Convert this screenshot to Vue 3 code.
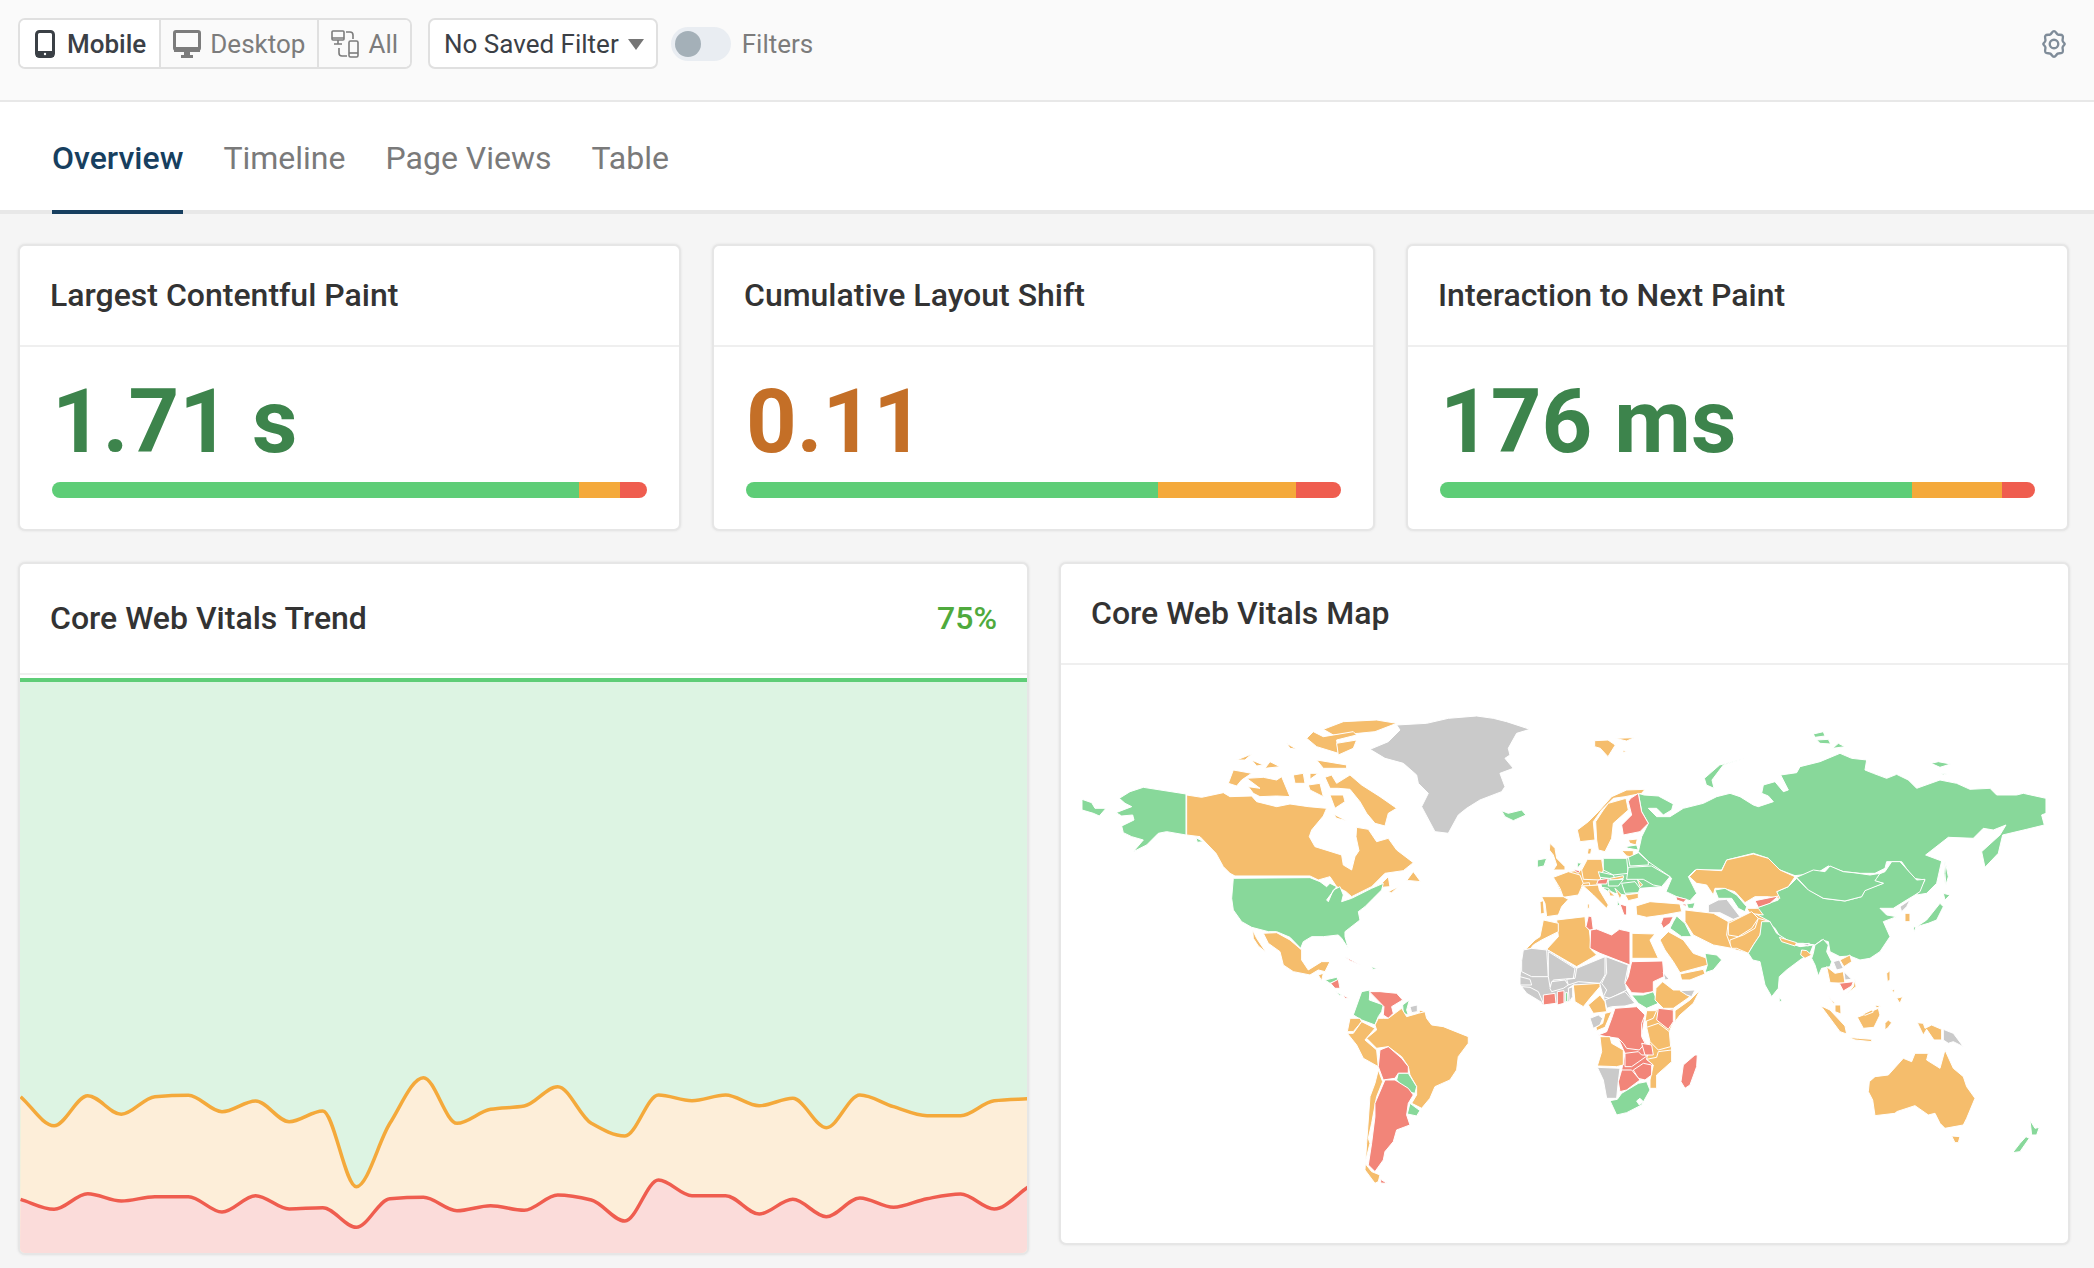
<template>
  <div class="page">
    <div class="toolbar">
      <div class="device-group">
        <button class="device active">
          <svg width="20" height="28" viewBox="0 0 20 28">
            <rect x="1.5" y="1.5" width="17" height="25" rx="3" fill="#fff" stroke="#3b4046" stroke-width="3" />
            <rect x="1" y="21" width="18" height="6" fill="#3b4046" />
            <circle cx="10" cy="24" r="1.2" fill="#fff" />
          </svg>
          Mobile
        </button>
        <button class="device">
          <svg width="28" height="28" viewBox="0 0 28 28">
            <rect x="1.5" y="1.5" width="25" height="18" rx="1.5" fill="none" stroke="#7c7c7c" stroke-width="3" />
            <rect x="1" y="17" width="26" height="5" fill="#7c7c7c" />
            <path d="M11 22h6v3h3v3H8v-3h3z" fill="#7c7c7c" />
          </svg>
          Desktop
        </button>
        <button class="device">
          <svg width="28" height="28" viewBox="0 0 28 28" fill="none" stroke="#7c7c7c" stroke-width="1.6">
            <rect x="1" y="1" width="12" height="9" rx="1" />
            <path d="M1 8h12M7 10v4M3 14h8" />
            <path d="M15 2h4a3 3 0 0 1 3 3v4M8 18v5a3 3 0 0 0 3 3h5" />
            <rect x="18" y="11" width="9" height="16" rx="1.5" />
            <path d="M18 23h9" />
          </svg>
          All
        </button>
      </div>
      <button class="saved-filter">No Saved Filter <span class="caret"></span></button>
      <span class="toggle"><span class="knob"></span></span>
      <span class="filters-label">Filters</span>
      <svg class="gear" width="30" height="30" viewBox="0 0 28 28" fill="none" stroke="#7f8c99" stroke-width="2.200">
        <path
          d="M14 2c1.600 0 2 2.200 3.400 3 1.500.8 3.600-.1 4.600 1.200 1 1.300-.2 3 0 4.600.2 1.500 2 2.400 2 3.200s-1.800 1.700-2 3.200c-.2 1.600 1 3.300 0 4.600-1 1.300-3.100.4-4.600 1.200-1.400.8-1.800 3-3.400 3s-2-2.200-3.400-3c-1.500-.8-3.600.1-4.600-1.200-1-1.300.2-3 0-4.600-.2-1.500-2-2.400-2-3.200s1.800-1.700 2-3.200c.2-1.600-1-3.300 0-4.600 1-1.300 3.100-.4 4.600-1.200C12 4.200 12.400 2 14 2z"
        />
        <circle cx="14" cy="14" r="4" />
      </svg>
    </div>

    <div class="tabs">
      <a v-for="(tab, i) in tabs" :key="tab" class="tab" :class="{ current: i === 0 }">{{ tab }}</a>
    </div>

    <div class="metrics">
      <div v-for="m in metrics" :key="m.title" class="card">
        <div class="card-head">{{ m.title }}</div>
        <div class="metric-body">
          <div class="metric-value" :class="m.tone">{{ m.value }}</div>
          <div class="bar">
            <span class="good" :style="{ width: m.good + '%' }"></span>
            <span class="warn" :style="{ width: m.warn + '%' }"></span>
            <span class="bad" :style="{ width: 100 - m.good - m.warn + '%' }"></span>
          </div>
        </div>
      </div>
    </div>

    <div class="panels">
      <div class="card trend">
        <div class="card-head trend-head">
          <span>Core Web Vitals Trend</span>
          <span class="pct">75%</span>
        </div>
        <svg class="chart" viewBox="20 675 1007 578" preserveAspectRatio="none">
          <rect x="20" y="680" width="1007" height="574" fill="#ddf4e3" />
          <path :d="orangeArea" fill="#fdeed9" />
          <path :d="redArea" fill="#fbdcda" />
          <path d="M20 680H1027" stroke="#5ecd77" stroke-width="4" fill="none" />
          <path :d="orangeLine" stroke="#f4a93b" stroke-width="3.500" fill="none" />
          <path :d="redLine" stroke="#ef5d4f" stroke-width="3.500" fill="none" />
        </svg>
      </div>

      <div class="card map-card">
        <div class="card-head">Core Web Vitals Map</div>
        <svg class="map" width="1007" height="578" viewBox="1061 665 1007 578">
          <g v-for="f in mapFrames" :key="f.x + '-' + f.y" :transform="`translate(${f.x} ${f.y}) scale(0.3333)`">
            <polygon v-for="(s, i) in f.shapes" :key="i" :class="'c-' + s[0]" :points="s[1]" />
          </g>
        </svg>
      </div>
    </div>
  </div>
</template>

<script setup>
const tabs = ['Overview', 'Timeline', 'Page Views', 'Table']

const metrics = [
  { title: 'Largest Contentful Paint', value: '1.71 s', tone: 'ok', good: 88.5, warn: 6.9 },
  { title: 'Cumulative Layout Shift', value: '0.11', tone: 'mid', good: 69.2, warn: 23.3 },
  { title: 'Interaction to Next Paint', value: '176 ms', tone: 'ok', good: 79.4, warn: 15.1 },
]

// chart samples, read off the reference
const orangeY = [290, 377, 287, 343, 290, 286, 335, 303, 365, 333, 560, 370, 233, 370, 328, 318, 260, 370, 408, 285, 302, 285, 317, 295, 383, 285, 320, 347, 347, 302, 296]
const redY = [598, 628, 581, 603, 590, 590, 636, 587, 627, 623, 682, 596, 592, 632, 617, 631, 585, 600, 663, 540, 587, 587, 642, 598, 650, 594, 622, 596, 582, 627, 562]

const toPoints = (ys) => ys.map((y, i) => [(31 + i * 50.63) / 1.508, 1000 + y / 3])

const curve = (pts) => {
  const slopes = []
  for (let i = 0; i < pts.length - 1; i++) {
    slopes.push((pts[i + 1][1] - pts[i][1]) / (pts[i + 1][0] - pts[i][0]))
  }
  const m = pts.map((_, i) => {
    if (i === 0) return slopes[0]
    if (i === pts.length - 1) return slopes[i - 1]
    const a = slopes[i - 1]
    const b = slopes[i]
    if (a * b <= 0) return 0
    return (2 * a * b) / (a + b)
  })
  let d = `M${pts[0][0].toFixed(1)} ${pts[0][1].toFixed(1)}`
  for (let i = 0; i < pts.length - 1; i++) {
    const dx = (pts[i + 1][0] - pts[i][0]) / 3
    d += `C${(pts[i][0] + dx).toFixed(1)} ${(pts[i][1] + m[i] * dx).toFixed(1)} ${(pts[i + 1][0] - dx).toFixed(1)} ${(pts[i + 1][1] - m[i + 1] * dx).toFixed(1)} ${pts[i + 1][0].toFixed(1)} ${pts[i + 1][1].toFixed(1)}`
  }
  return d
}

const orangeLine = curve(toPoints(orangeY))
const redLine = curve(toPoints(redY))
const orangeArea = orangeLine + 'V1254H20Z'
const redArea = redLine + 'V1254H20Z'

// map shapes, each frame uses 3x coordinates from its origin
const mapFrames = [
  {
    x: 1060,
    y: 690,
    shapes: [
      ['g', '378,312 250,292 210,305 178,325 195,340 215,350 168,368 185,378 218,375 222,390 185,408 190,428 215,440 250,450 220,485 260,465 295,430 320,425 378,435'],
      ['g', '66,328 95,338 105,355 138,355 118,378 100,370 66,360'],
      ['o', '380,315 425,322 490,308 510,320 575,318 590,335 650,350 690,342 745,350 800,355 790,378 755,420 748,440 765,470 845,495 850,525 875,540 885,500 897,482 888,440 890,412 925,418 950,455 985,445 1010,480 1060,518 1030,542 975,550 935,590 875,620 858,605 830,590 810,560 775,570 750,558 525,558 510,550 490,530 468,490 420,440 380,435'],
      ['g', '408,443 430,455 412,457'],
      ['o', '795,262 815,255 830,280 870,255 905,285 960,320 1010,355 985,370 975,408 945,400 920,370 900,335 870,298 835,295 810,295'],
      ['o', '820,372 860,392 830,385'],
      ['o', '560,265 610,262 650,270 665,260 690,320 650,318 600,320 580,310 565,290 600,295'],
      ['o', '505,280 520,240 575,250 545,270 530,288'],
      ['o', '700,255 730,250 735,280 705,280'],
      ['o', '745,285 780,280 790,320 750,300'],
      ['o', '810,315 850,315 855,335 825,355'],
      ['o', '790,118 850,95 950,90 1010,100 945,125 895,130 820,135'],
      ['o', '740,145 760,125 790,140 880,125 890,135 830,150 835,190 770,170'],
      ['o', '830,160 890,150 880,175 835,195'],
      ['o', '770,210 860,225 860,235 790,235'],
      ['o', '575,210 610,225 590,228'],
      ['o', '530,210 575,192 555,210'],
      ['o', '680,160 710,178 690,175'],
      ['o', '630,215 660,230 615,235'],
      ['o', '750,250 775,250 750,268'],
      ['o', '1040,572 1060,545 1082,575 1050,572'],
      ['o', '985,605 1015,590 995,608'],
      ['o', '960,585 985,560 990,590 965,592'],
      ['g', '520,565 750,563 780,575 800,590 810,580 830,590 800,630 805,635 820,600 840,590 850,615 845,635 875,625 935,595 970,580 965,600 940,625 915,650 895,665 900,690 855,725 855,740 865,775 845,745 835,735 790,740 755,740 730,755 722,775 690,742 650,725 625,725 575,712 545,695 520,660 515,625'],
      ['o', '610,730 650,728 690,750 725,780 725,810 745,840 785,815 810,815 795,845 775,840 750,855 700,845 670,825 660,785 625,760'],
      ['o', '578,720 590,745 618,787 595,768 580,745'],
      ['g', '795,870 830,862 835,870 810,880'],
      ['r', '812,880 835,868 840,895 825,895'],
      ['g', '825,903 845,915 840,917'],
      ['r', '850,915 865,925 855,925'],
      ['o', '775,855 790,850 785,872'],
      ['r', '855,800 902,824 870,812'],
      ['g', '935,830 952,836 938,838'],
      ['g', '905,905 930,900 928,930 970,945 965,965 955,980 945,1005 905,990 880,975'],
      ['r', '928,905 960,905 1010,910 1028,930 995,950 1000,970 985,985 970,975 972,950'],
      ['g', '1028,945 1048,930 1040,960 1045,975 1030,970'],
      ['k', '1050,950 1072,945 1072,965 1055,968'],
      ['o', '1078,960 1095,965 1078,972'],
      ['o', '955,985 970,985 985,985 1025,955 1040,980 1075,970 1095,965 1100,985 1115,1005 1150,1010 1225,1040 1225,1060 1195,1100 1190,1140 1170,1170 1125,1190 1110,1225 1085,1255 1055,1240 1070,1215 1070,1190 1050,1155 1045,1130 1025,1100 985,1070 950,1075 920,1045 950,1020 945,1005'],
      ['o', '870,985 900,985 905,995 880,1025 862,1025'],
      ['o', '905,995 945,1015 915,1050 950,1080 955,1130 910,1105 890,1065 862,1030 880,1030'],
      ['r', '960,1080 985,1070 1025,1105 1045,1130 1045,1150 1015,1150 1005,1165 970,1170 955,1130'],
      ['g', '1015,1150 1045,1150 1070,1190 1065,1210 1040,1205 1010,1170'],
      ['o', '955,1140 968,1175 950,1220 935,1300 925,1345 930,1360 915,1420 935,1445 960,1455 955,1475 945,1480 915,1440 920,1360 930,1220 945,1180'],
      ['r', '975,1170 1005,1170 1045,1195 1060,1215 1045,1240 1040,1275 1050,1305 1010,1320 1000,1355 975,1385 970,1410 945,1445 925,1425 935,1360 945,1280 945,1240'],
      ['g', '1050,1240 1080,1262 1070,1278 1042,1272'],
      ['r', '962,1468 982,1481 962,1479'],
      ['k', '1010,105 1100,100 1165,85 1250,78 1300,85 1340,95 1410,118 1370,130 1345,175 1350,195 1335,205 1360,235 1320,250 1335,290 1325,305 1260,330 1220,355 1195,375 1165,430 1125,425 1085,350 1105,310 1075,280 1070,255 1030,220 975,205 930,178 985,155 1020,120'],
      ['g', '1325,362 1345,370 1385,360 1398,375 1360,392 1335,380'],
    ],
  },
  {
    // russia and the far east
    x: 1760,
    y: 730,
    shapes: [
      ['g', '-365,190 -348,195 -305,198 -260,222 -265,240 -290,255 -310,235 -335,235 -310,260 -270,260 -230,235 -170,220 -130,200 -90,190 -60,200 -20,225 -5,230 40,215 25,198 5,190 10,165 45,155 70,185 85,180 62,135 110,128 120,110 180,95 240,70 275,85 320,90 315,120 340,130 380,145 410,133 445,150 470,175 540,150 590,160 630,178 690,175 710,195 770,195 790,190 858,205 858,250 845,255 853,285 800,298 728,315 715,370 675,412 665,365 720,315 738,285 700,300 670,295 640,325 565,322 497,375 545,393 530,460 500,490 470,495 495,450 460,445 425,395 380,395 375,415 345,430 300,430 250,425 205,408 170,430 105,437 60,420 25,385 -20,370 -100,390 -115,420 -195,420 -215,440 -190,490 -210,512 -250,500 -282,485 -265,445 -325,408 -335,395 -365,365 -355,320 -335,280 -355,245'],
      ['g', '160,12 190,5 195,18 165,22'],
      ['g', '170,30 205,28 212,42 180,40'],
      ['g', '218,55 235,40 255,50'],
      ['g', '513,100 535,95 572,102 540,112'],
      ['g', '545,130 560,132 548,135'],
      ['g', '-167,145 -121,105 -42,85 -110,105 -144,150 -138,175 -161,165'],
      ['g', '555,395 565,435 555,460 552,430'],
    ],
  },
  {
    x: 1680,
    y: 820,
    shapes: [
      ['g', '350,175 380,205 430,235 495,243 545,230 555,210 610,190 580,182 590,165 615,155 635,125 660,125 710,180 735,178 720,215 705,225 680,240 640,265 600,265 620,285 650,290 610,305 630,350 600,395 570,415 540,420 510,408 480,410 450,395 445,365 425,360 405,375 370,370 340,370 300,350 285,325 260,305 235,290 225,265 295,240 290,215 325,200'],
      ['g', '350,172 400,150 435,155 450,138 490,155 520,158 570,165 600,160 590,175 585,182 610,190 555,212 545,230 495,243 430,235 385,210'],
      ['o', '28,170 50,148 125,152 140,120 220,102 265,115 300,150 345,170 325,200 290,215 300,235 265,230 225,230 195,248 165,215 130,205 105,205 100,225 80,195 50,190'],
      // underlay so iran, afghanistan and pakistan touch
      ['o', '15,270 100,280 145,305 215,275 270,305 240,345 205,400 150,385 100,375 40,345 15,305'],
      ['g', '105,210 135,205 170,225 200,260 195,275 175,265 155,235 115,235'],
      ['k', '85,255 115,240 140,238 180,290 160,298 120,278 85,278'],
      ['r', '225,242 295,228 270,250 235,262'],
      ['o', '200,265 235,265 250,285 210,280'],
      ['o', '145,310 215,275 235,295 215,325 175,350 145,345'],
      ['o', '150,360 190,345 225,325 235,295 270,305 245,320 240,345 220,375 205,400 170,385 150,385'],
      ['o', '15,270 100,280 145,305 140,345 155,385 100,375 40,345 15,305'],
      ['g', '245,305 270,305 290,340 345,375 360,380 400,375 390,400 360,420 320,450 298,470 295,505 275,530 255,495 240,425 218,420 205,400 220,375 240,345'],
      ['g', '405,375 430,358 445,375 440,395 455,425 450,440 425,445 415,468 405,435 395,415 400,400'],
      ['o', '298,352 350,368 345,378 305,365'],
      ['k', '365,372 388,370 385,378'],
      ['o', '365,390 380,392 395,405 375,415 362,405'],
      ['o', '440,440 465,460 490,455 495,490 450,488'],
      ['k', '460,425 478,420 490,445 470,450'],
      ['o', '480,420 510,405 515,425 492,440'],
      ['k', '492,455 515,478 495,480'],
      ['r', '478,490 520,485 515,498 490,513'],
      ['o', '525,478 528,500 498,522 520,500'],
      ['k', '660,260 690,240 680,260 665,275'],
      ['o', '675,280 690,280 690,305 675,305'],
      ['g', '780,250 790,260 770,300 745,310 710,320 740,300'],
      ['g', '790,220 810,225 795,240'],
      ['g', '797,130 805,170 798,195 795,160'],
      ['g', '700,320 708,322 703,335'],
      ['g', '298,530 306,543 298,545'],
    ],
  },
  {
    x: 1500,
    y: 780,
    shapes: [
      // underlays so neighbours in europe touch
      ['g', '310,235 380,235 415,218 445,245 510,290 485,320 420,325 415,338 375,345 345,340 305,322 295,275'],
      ['o', '245,270 262,238 305,238 310,270 295,315 250,318 235,345 190,352 160,292 205,275'],
      ['o', '284,-118 324,-120 346,-105 324,-70 301,-95 284,-100'],
      ['o', '346,-125 403,-127 380,-117'],
      ['o', '369,-90 380,-85 369,-83'],
      ['g', '112,240 140,235 132,258 112,262'],
      ['o', '150,190 165,205 170,235 195,260 195,270 160,270 170,255 160,225 148,210'],
      ['o', '335,50 380,30 435,28 425,40 375,50 340,55 305,90 280,125 285,180 240,185 232,150 265,125 295,95'],
      ['o', '325,70 378,55 385,90 340,130 335,175 315,215 295,210 290,180 287,125 310,90'],
      ['r', '392,55 415,40 425,95 445,130 420,155 370,165 365,135 395,105 385,65'],
      ['o', '385,180 412,177 408,195 390,190'],
      ['g', '375,200 410,195 415,210 385,205'],
      ['o', '365,212 400,212 400,232 380,228'],
      ['g', '415,218 445,245 445,255 390,258 385,232'],
      ['g', '310,235 380,235 385,280 340,285 310,270'],
      ['o', '262,238 305,238 310,270 300,300 250,298 245,270'],
      ['o', '265,205 275,205 272,222 262,222'],
      ['g', '232,248 245,250 232,265'],
      ['r', '218,268 240,272 235,280'],
      ['o', '160,292 205,275 240,285 250,310 235,345 190,352 180,325'],
      ['o', '125,350 190,350 205,358 185,380 175,405 140,410 135,370'],
      ['o', '120,365 130,362 133,400 122,402'],
      ['o', '250,310 268,308 270,318 245,318'],
      ['r', '295,300 325,295 320,312 290,312'],
      ['g', '295,275 340,285 345,297 300,292'],
      ['o', '330,295 370,287 370,295 335,302'],
      ['g', '325,300 370,298 355,318 325,318'],
      ['g', '365,310 405,305 420,325 415,338 375,340'],
      ['o', '412,298 428,315 420,320'],
      ['g', '385,262 455,258 510,290 485,320 460,315 430,298 380,298'],
      ['o', '375,345 415,340 415,355 385,362'],
      ['o', '345,325 365,345 360,358'],
      ['o', '250,318 295,315 298,330 325,375 320,385 280,345'],
      ['o', '262,372 268,372 268,385 262,385'],
      ['g', '305,322 325,325 340,345'],
      ['o', '325,330 345,348 330,348'],
      ['g', '352,360 360,375 352,378'],
      ['r', '360,372 380,378 380,405 372,405'],
      ['o', '408,378 450,365 540,372 545,395 490,405 440,412 410,405'],
      ['r', '528,350 560,358 550,367 530,360'],
      ['g', '560,372 585,368 580,385 565,385'],
      ['r', '545,372 558,372 558,380'],
      ['r', '490,412 520,410 510,430 490,445 483,430'],
      ['g', '530,408 555,430 575,470 545,470 510,445 520,425'],
      ['o', '480,480 505,455 550,480 580,520 635,540 625,555 540,578 520,545 495,510'],
      ['o', '540,582 610,568 615,582 570,600 545,600'],
      ['g', '615,520 650,525 665,540 640,570 615,578 622,555'],
      ['o', '170,420 255,410 258,440 268,450 275,510 290,525 230,560 140,508 175,470'],
      ['o', '130,420 175,430 175,455 125,480 100,495 65,540 80,505 105,480 120,470'],
      ['r', '265,408 275,410 280,450 268,450 258,440'],
      ['r', '272,450 290,447 335,465 358,448 390,455 390,555 300,520 270,505'],
      ['o', '396,460 465,462 450,480 475,535 396,535'],
    ],
  },
  {
    x: 1510,
    y: 940,
    shapes: [
      // underlays so neighbours in africa touch
      ['k', '35,62 40,28 110,28 200,85 285,50 355,75 350,150 375,190 345,198 290,205 280,170 270,135 190,135 175,145 188,170 178,185 100,195 60,160 30,135 30,110'],
      ['r', '315,205 380,200 405,225 395,290 430,345 425,405 390,420 350,450 330,455 325,425 335,390 345,340 325,295 290,290 305,235'],
      ['o', '410,212 490,205 490,245 478,275 485,330 485,365 440,405 440,445 420,445 430,375 410,358 420,305 410,262'],
      ['k', '35,62 40,30 65,25 110,30 115,110 65,110 35,95'],
      ['k', '115,35 195,85 190,115 130,120 120,140 115,110'],
      ['k', '200,85 285,50 285,105 270,130 205,125 175,135 170,118 195,115'],
      ['k', '288,50 355,75 345,125 350,150 300,175 280,170 290,150 275,130 290,100'],
      ['k', '285,180 345,155 375,190 345,198 305,200 290,205'],
      ['k', '30,110 60,118 65,135 30,135'],
      ['k', '35,140 60,142 85,155 100,190 75,175 50,160'],
      ['k', '125,125 165,120 175,135 160,145 125,155 120,145'],
      ['r', '100,165 135,160 138,190 100,195'],
      ['r', '142,155 162,152 162,190 142,195'],
      ['g', '166,158 173,158 173,185 166,185'],
      ['k', '175,145 188,140 188,170 178,185'],
      ['o', '190,135 270,130 270,140 240,175 220,200 195,185'],
      ['o', '270,165 285,185 290,215 250,220 235,195'],
      ['k', '240,235 265,225 278,235 270,255 250,265'],
      ['o', '285,220 305,215 285,262 260,272 258,262 278,250'],
      ['r', '315,205 380,200 395,215 405,225 395,250 395,290 405,310 388,330 350,325 340,310 325,295 290,290 265,285 290,275 305,235'],
      ['r', '365,65 458,63 462,110 430,125 430,155 400,160 365,158 345,130 355,110'],
      ['g', '365,165 400,165 430,155 445,190 410,205 385,190'],
      ['o', '458,125 490,150 510,150 540,170 490,205 460,205 435,180 438,145'],
      ['k', '460,98 478,118 465,120'],
      ['k', '510,152 555,150 545,170 530,165'],
      ['o', '570,150 550,190 510,225 495,245 495,212 540,180'],
      ['r', '445,205 490,210 490,245 475,268 440,240'],
      ['o', '410,212 440,212 430,235 405,245'],
      ['o', '410,262 445,250 478,275 482,320 445,330 420,305'],
      ['o', '270,290 300,290 305,310 340,330 340,375 320,380 262,378 275,335'],
      ['r', '345,340 385,335 395,345 415,345 365,380 345,380'],
      ['r', '395,310 425,315 430,345 405,345'],
      ['o', '445,335 485,330 485,365 440,405 440,445 420,445 420,420 430,375 410,358 440,352'],
      ['r', '370,390 400,370 425,375 425,405 405,420 385,415'],
      ['r', '335,390 365,390 390,420 350,450 330,455 325,425'],
      ['k', '262,382 330,385 325,425 320,475 290,475 280,420'],
      ['g', '300,482 322,478 335,460 385,430 410,425 420,450 395,495 350,518 320,525'],
      ['w', '380,483 390,475 400,485 388,495'],
      ['r', '555,345 562,345 560,380 540,435 525,445 513,425 520,375'],
    ],
  },
  {
    x: 1780,
    y: 940,
    shapes: [
      ['o', '268,425 285,410 325,405 370,355 395,365 405,340 445,340 440,360 480,385 495,330 520,385 550,410 560,440 585,475 560,535 550,555 495,565 480,550 465,520 445,525 405,497 350,515 345,520 285,527 278,480 265,455'],
      ['o', '515,588 540,590 535,608 525,608'],
      ['g', '750,540 765,565 778,562 770,585 755,585'],
      ['g', '738,590 748,595 720,635 698,638 720,610'],
      ['o', '122,197 150,210 195,258 200,282 180,275'],
      ['o', '205,292 235,295 275,298 275,305 225,300'],
      ['o', '232,232 250,225 295,205 300,225 282,262 250,265'],
      ['o', '250,222 275,210 280,216 255,226'],
      ['o', '285,195 302,198 290,204'],
      ['o', '315,250 325,240 335,248 325,262 315,270'],
      ['o', '320,100 330,92 330,120 322,125'],
      ['o', '335,148 345,150 340,158'],
      ['o', '350,175 368,170 360,190'],
      ['o', '412,248 430,250 435,265 455,255 485,268 485,300 462,300 440,268 430,285'],
      ['k', '490,268 520,280 550,320 520,305 505,310 490,300'],
      ['o', '165,195 182,195 183,222 165,215'],
      ['o', '145,168 165,190 160,190'],
    ],
  },
]
</script>

<style scoped>
.page {
  width: 2094px;
  min-height: 1268px;
  background: #f5f5f5;
  font-family: Roboto, 'Liberation Sans', sans-serif;
  color: #333;
  box-sizing: border-box;
}

.toolbar {
  display: flex;
  align-items: center;
  height: 102px;
  box-sizing: border-box;
  padding: 0 19px 13px 18px;
  background: #fafafa;
  border-bottom: 2px solid #e8e8e8;
}

.device-group {
  display: flex;
  height: 51px;
  border: 2px solid #e0e0e0;
  border-radius: 7px;
  background: #fff;
  box-sizing: border-box;
}

.device {
  display: flex;
  align-items: center;
  gap: 9px;
  height: 100%;
  padding: 0 12px;
  border: 0;
  border-left: 2px solid #e0e0e0;
  background: #fafafa;
  color: #7c7c7c;
  font: 400 26px Roboto, sans-serif;
}

.device:first-child {
  border-left: 0;
  border-radius: 5px 0 0 5px;
  padding: 0 13px 0 15px;
  background: #fff;
}

.device:last-child {
  border-radius: 0 5px 5px 0;
}

.device.active {
  gap: 12px;
  color: #3b4046;
  font-weight: 500;
}

.saved-filter {
  display: flex;
  align-items: center;
  gap: 9px;
  height: 51px;
  box-sizing: border-box;
  margin-left: 16px;
  padding: 0 12px 0 14px;
  border: 2px solid #e0e0e0;
  border-radius: 7px;
  background: #fff;
  color: #3b4046;
  font: 400 26px Roboto, sans-serif;
  white-space: nowrap;
}

.caret {
  width: 0;
  height: 0;
  border-left: 8px solid transparent;
  border-right: 8px solid transparent;
  border-top: 11px solid #757575;
  margin-top: 2px;
}

.toggle {
  display: flex;
  align-items: center;
  width: 60px;
  height: 34px;
  margin-left: 13px;
  padding-left: 4px;
  box-sizing: border-box;
  border-radius: 17px;
  background: #e9edf2;
}

.knob {
  width: 26px;
  height: 26px;
  border-radius: 50%;
  background: #a4b0b8;
}

.filters-label {
  margin-left: 11px;
  font-size: 26px;
  color: #7c7c7c;
}

.gear {
  margin-left: auto;
  margin-right: 6px;
}

.tabs {
  display: flex;
  gap: 40px;
  height: 112px;
  box-sizing: border-box;
  padding: 0 52px;
  background: #fff;
  border-bottom: 4px solid #e8e8e8;
}

.tab {
  display: flex;
  align-items: center;
  height: 112px;
  box-sizing: border-box;
  padding-top: 4px;
  border-bottom: 4px solid transparent;
  font-size: 32px;
  color: #7a7a7a;
}

.tab.current {
  color: #173f5f;
  font-weight: 500;
  border-bottom-color: #173f5f;
}

.metrics {
  display: grid;
  grid-template-columns: 663px 663px 663px;
  gap: 31px;
  padding: 30px 0 0 18px;
}

.card {
  background: #fff;
  border: 2px solid #e6e6e6;
  border-radius: 7px;
  box-sizing: border-box;
  overflow: hidden;
  box-shadow: 0 0 3px rgba(0, 0, 0, 0.08);
}

.card-head {
  display: flex;
  align-items: center;
  height: 101px;
  padding: 0 30px 2px;
  box-sizing: border-box;
  border-bottom: 2px solid #efefef;
  font-size: 32px;
  font-weight: 500;
  color: #333;
}

.metric-body {
  height: 182px;
  padding: 0 32px;
}

.metric-value {
  height: 135px;
  line-height: 150px;
  font-size: 88.5px;
  font-weight: 700;
}

.metric-value.ok {
  color: #3d844c;
}

.metric-value.mid {
  color: #c46f27;
}

.bar {
  display: flex;
  height: 16px;
  border-radius: 8px;
  overflow: hidden;
}

.good {
  background: #5ecd77;
}

.warn {
  background: #f4a93b;
}

.bad {
  background: #ef5d4f;
}

.panels {
  display: grid;
  grid-template-columns: 1011px 1011px;
  gap: 30px;
  align-items: start;
  padding: 31px 0 0 18px;
}

.trend {
  height: 693px;
}

.trend-head {
  justify-content: space-between;
  height: 111px;
}

.pct {
  color: #4faa3d;
}

.chart {
  display: block;
  width: 100%;
  height: 578px;
}

.map {
  display: block;
}

.map polygon {
  stroke: #fff;
  stroke-width: 3;
  stroke-linejoin: round;
}

.c-g {
  fill: #88d89a;
}

.c-o {
  fill: #f5bd6c;
}

.c-r {
  fill: #f28579;
}

.c-k {
  fill: #cacaca;
}

.c-w {
  fill: #fff;
}
</style>
